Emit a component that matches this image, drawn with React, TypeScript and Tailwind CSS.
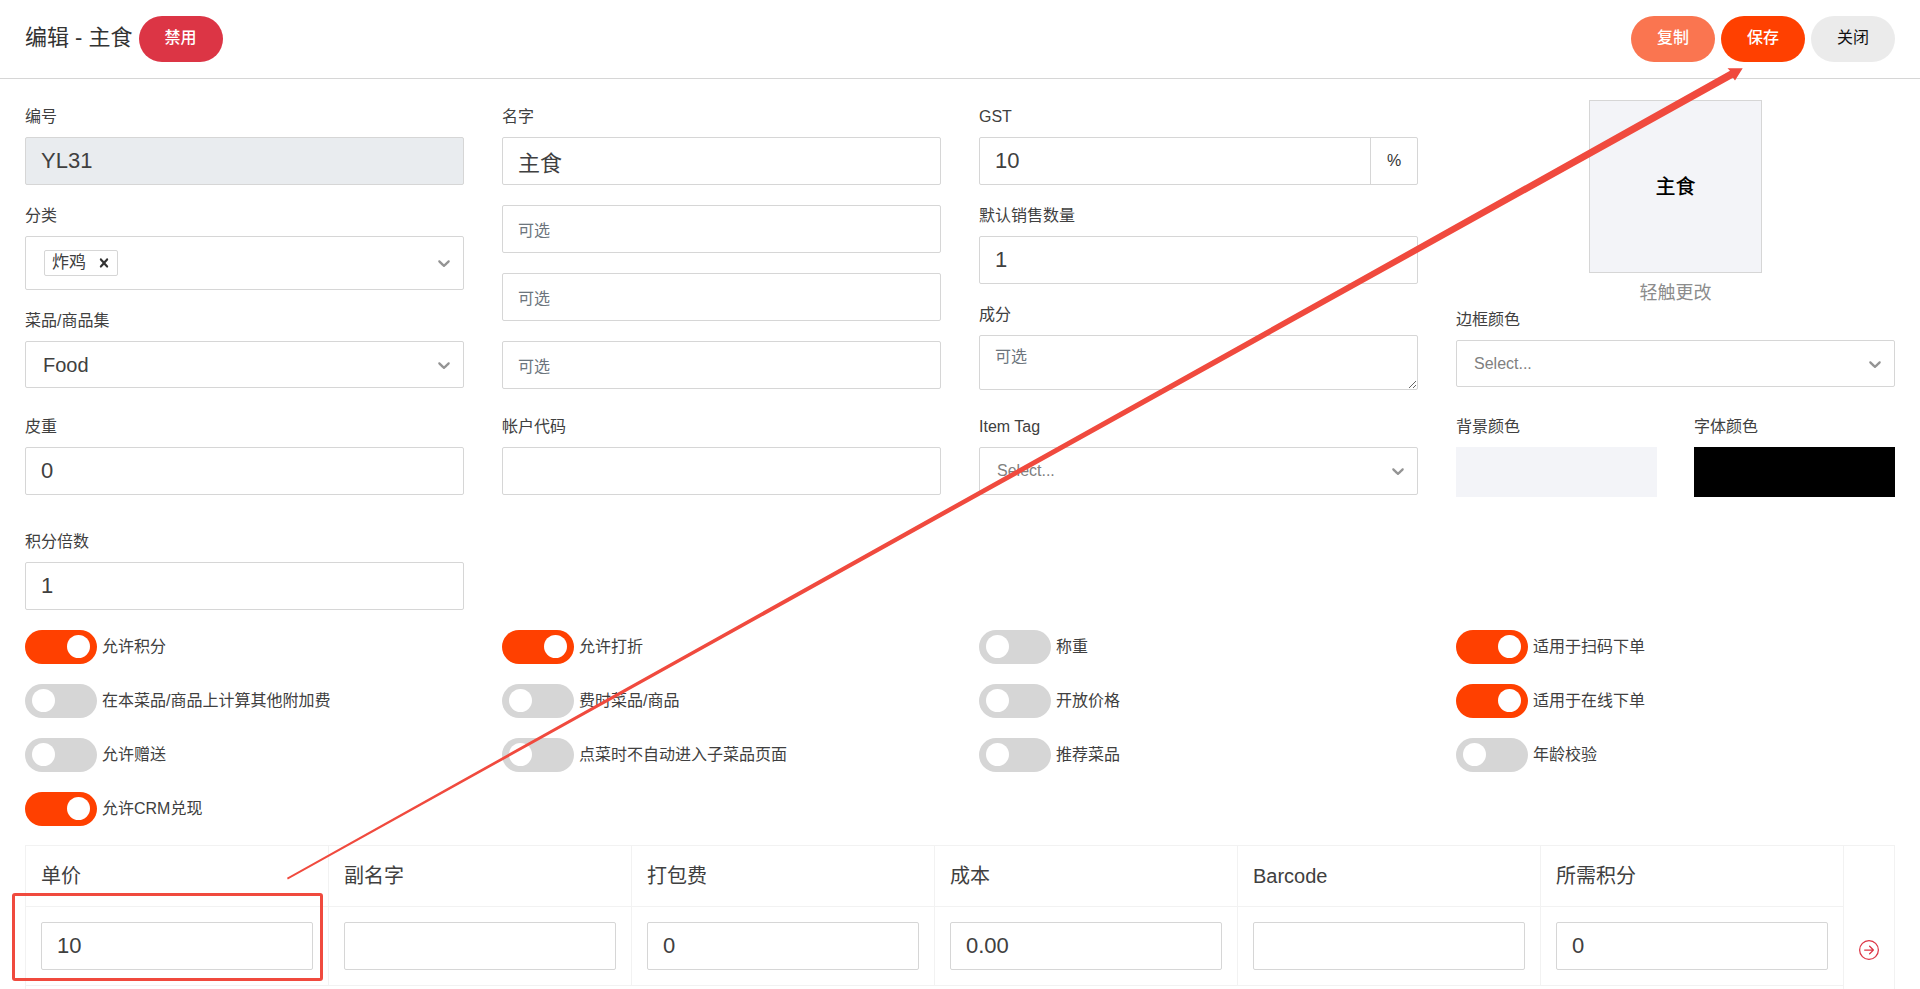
import { useId, type ReactNode } from "react";
import { BsArrowRightCircle } from "react-icons/bs";

const controlClass =
  "block w-full rounded-xs border border-[#d6d6d6] bg-white px-[15px] text-[22px] text-[#404040] outline-none placeholder:text-base placeholder:text-[#6c757d]";

function Field({ label, children }: { label: string; children: (id: string) => ReactNode }) {
  const id = useId();
  return (
    <div>
      <label htmlFor={id} className="mb-[7px] block leading-[26px]">
        {label}
      </label>
      {children(id)}
    </div>
  );
}

function TextField({ label, value = "", disabled = false }: { label: string; value?: string; disabled?: boolean }) {
  return (
    <Field label={label}>
      {(id) => (
        <input
          id={id}
          defaultValue={value}
          disabled={disabled}
          className={`${controlClass} h-12 disabled:bg-[#e9ecef]`}
        />
      )}
    </Field>
  );
}

function Chevron() {
  return (
    <svg
      viewBox="0 0 20 20"
      aria-hidden="true"
      className="pointer-events-none absolute top-1/2 right-[10px] size-5 -translate-y-1/2 fill-[#949494]"
    >
      <path d="M4.516 7.548c0.436-0.446 1.043-0.481 1.576 0l3.908 3.747 3.908-3.747c0.533-0.481 1.141-0.446 1.574 0 0.436 0.445 0.408 1.197 0 1.615-0.406 0.418-4.695 4.502-4.695 4.502-0.217 0.223-0.502 0.335-0.787 0.335s-0.57-0.112-0.789-0.335c0 0-4.287-4.084-4.695-4.502s-0.436-1.17 0-1.615z" />
    </svg>
  );
}

function SelectField({ label, value, height = "h-12" }: { label: string; value?: string; height?: string }) {
  return (
    <Field label={label}>
      {(id) => (
        <div className="relative">
          <select
            id={id}
            className={`block w-full appearance-none rounded-xs border border-[#d6d6d6] bg-white px-[17px] outline-none ${height} ${
              value ? "text-xl text-[#404040]" : "text-base text-[#808080]"
            }`}
          >
            <option>{value ?? "Select..."}</option>
          </select>
          <Chevron />
        </div>
      )}
    </Field>
  );
}

function CategoryField() {
  return (
    <Field label="分类">
      {(id) => (
        <div className="relative">
          <div className="flex h-[54px] items-center rounded-xs border border-[#d6d6d6] pr-10 pl-[18px]">
            <span className="flex h-[26px] shrink-0 items-center rounded-xs border border-[#d6d6d6] pr-[3px] pl-[7px] text-[17px] leading-6">
              炸鸡
              <button type="button" aria-label="移除炸鸡" className="ml-2 p-px">
                <svg viewBox="0 0 20 20" aria-hidden="true" className="size-[18px] fill-[#333333]">
                  <path d="M14.348 14.849c-0.469 0.469-1.229 0.469-1.697 0l-2.651-3.030-2.651 3.029c-0.469 0.469-1.229 0.469-1.697 0-0.469-0.469-0.469-1.229 0-1.697l2.758-3.15-2.759-3.152c-0.469-0.469-0.469-1.228 0-1.697s1.228-0.469 1.697 0l2.652 3.031 2.651-3.031c0.469-0.469 1.228-0.469 1.697 0s0.469 1.229 0 1.697l-2.758 3.152 2.758 3.15c0.469 0.469 0.469 1.229 0 1.698z" />
                </svg>
              </button>
            </span>
            <input id={id} className="min-w-0 flex-1 outline-none" />
          </div>
          <Chevron />
        </div>
      )}
    </Field>
  );
}

function NameFields() {
  return (
    <div className="flex flex-col gap-5">
      <TextField label="名字" value="主食" />
      {[1, 2, 3].map((n) => (
        <input key={n} aria-label={`名字 ${n + 1}`} placeholder="可选" className={`${controlClass} h-12`} />
      ))}
    </div>
  );
}

function GstField() {
  return (
    <Field label="GST">
      {(id) => (
        <div className="flex h-12 overflow-hidden rounded-xs border border-[#d6d6d6]">
          <input
            id={id}
            defaultValue="10"
            className="min-w-0 flex-1 px-[15px] pb-0.5 text-[22px] outline-none"
          />
          <span className="flex w-[47px] items-center justify-center border-l border-[#d6d6d6] text-[#333333]">%</span>
        </div>
      )}
    </Field>
  );
}

function Swatch({ label, color }: { label: string; color: string }) {
  return (
    <Field label={label}>
      {(id) => <button id={id} type="button" className={`block h-[50px] w-full ${color}`} />}
    </Field>
  );
}

function Toggle({ label, on = false }: { label: string; on?: boolean }) {
  return (
    <label className="flex h-[34px] items-center gap-[5px] leading-6">
      <input
        type="checkbox"
        defaultChecked={on}
        className="h-[34px] w-[72px] shrink-0 appearance-none rounded-full bg-[#d6d6d6] px-[7px] py-[5px] before:block before:size-[23px] before:rounded-full before:bg-white checked:bg-[#ff4000] checked:before:translate-x-[35px]"
      />
      <span>{label}</span>
    </label>
  );
}

function PillButton({ children, className }: { children: ReactNode; className: string }) {
  return (
    <button type="button" className={`h-[46px] w-[84px] rounded-full pb-0.5 ${className}`}>
      {children}
    </button>
  );
}

const toggles: { label: string; on?: boolean }[] = [
  { label: "允许积分", on: true },
  { label: "允许打折", on: true },
  { label: "称重" },
  { label: "适用于扫码下单", on: true },
  { label: "在本菜品/商品上计算其他附加费" },
  { label: "费时菜品/商品" },
  { label: "开放价格" },
  { label: "适用于在线下单", on: true },
  { label: "允许赠送" },
  { label: "点菜时不自动进入子菜品页面" },
  { label: "推荐菜品" },
  { label: "年龄校验" },
  { label: "允许CRM兑现", on: true },
];

const priceColumns = [
  { name: "单价", value: "10", marked: true },
  { name: "副名字", value: "" },
  { name: "打包费", value: "0" },
  { name: "成本", value: "0.00" },
  { name: "Barcode", value: "" },
  { name: "所需积分", value: "0" },
];

function PriceTable() {
  const cell = "border border-[#f2f2f2]";
  return (
    <table className="mt-[19px] w-full table-fixed border-collapse">
      <colgroup>
        {priceColumns.map((c) => (
          <col key={c.name} />
        ))}
        <col className="w-[51px]" />
      </colgroup>
      <tbody>
        <tr>
          {priceColumns.map((c) => (
            <th key={c.name} scope="col" className={`${cell} h-[61px] px-[15px] text-left text-xl font-normal`}>
              {c.name}
            </th>
          ))}
          <td rowSpan={3} className={cell}>
            <button type="button" aria-label="展开" className="mx-auto block text-[#dc3545]">
              <BsArrowRightCircle size={20} />
            </button>
          </td>
        </tr>
        <tr>
          {priceColumns.map((c) => (
            <td key={c.name} className={`${cell} h-[79px] px-[15px]`}>
              <div className="relative">
                <input aria-label={c.name} defaultValue={c.value} className={`${controlClass} h-12`} />
                {c.marked && (
                  <div className="pointer-events-none absolute -top-[29px] -right-[10px] -bottom-[11px] -left-[29px] rounded-[3px] border-3 border-[#f04a3e]" />
                )}
              </div>
            </td>
          ))}
        </tr>
        <tr>
          <td colSpan={6} className={`${cell} h-[69px]`} />
        </tr>
      </tbody>
    </table>
  );
}

export default function App() {
  return (
    <div className="relative h-screen overflow-hidden bg-white font-['Liberation_Sans','Noto_Sans_CJK_SC',sans-serif] text-base text-[#404040]">
      <header className="flex items-center gap-[6px] border-b border-[#d6d6d6] px-[25px] py-4">
        <h1 className="pb-0.5 text-[22px] leading-[44px] text-[#333333]">编辑 - 主食</h1>
        <PillButton className="bg-[#dc3545] font-medium text-white">禁用</PillButton>
        <div className="ml-auto flex gap-[6px]">
          <PillButton className="bg-[#fa7550] font-medium text-white">复制</PillButton>
          <PillButton className="bg-[#ff4000] font-medium text-white">保存</PillButton>
          <PillButton className="bg-[#ebebeb] text-[#111111]">关闭</PillButton>
        </div>
      </header>

      <main className="px-[25px] pt-[21px]">
        <div className="grid grid-cols-4 gap-x-[38px]">
          <div className="mt-1 flex flex-col gap-[18px]">
            <TextField label="编号" value="YL31" disabled />
            <CategoryField />
            <SelectField label="菜品/商品集" value="Food" height="h-[47px]" />
          </div>
          <div className="mt-1">
            <NameFields />
          </div>
          <div className="mt-1 flex flex-col gap-[18px]">
            <GstField />
            <TextField label="默认销售数量" value="1" />
            <Field label="成分">
              {(id) => (
                <textarea
                  id={id}
                  placeholder="可选"
                  className={`${controlClass} h-[55px] resize-y py-[9px] leading-[30px]`}
                />
              )}
            </Field>
          </div>
          <div>
            <div className="flex flex-col items-center">
              <button
                type="button"
                className="size-[173px] border border-[#d6d6d6] bg-[#f3f4f8] text-xl font-medium text-black"
              >
                主食
              </button>
              <span className="mt-[7px] text-lg leading-[27px] text-[#8c8c8c]">轻触更改</span>
            </div>
            <SelectField label="边框颜色" height="h-[47px]" />
          </div>
        </div>

        <div className="mt-6 grid grid-cols-4 gap-x-[38px] gap-y-8">
          <TextField label="皮重" value="0" />
          <TextField label="帐户代码" />
          <SelectField label="Item Tag" />
          <div className="grid grid-cols-2 gap-[37px]">
            <Swatch label="背景颜色" color="bg-[#f3f4f8]" />
            <Swatch label="字体颜色" color="bg-black" />
          </div>
          <TextField label="积分倍数" value="1" />
        </div>

        <div className="mt-5 grid grid-cols-4 gap-x-[38px] gap-y-5">
          {toggles.map((t) => (
            <Toggle key={t.label} {...t} />
          ))}
        </div>

        <PriceTable />
      </main>

      <svg
        viewBox="0 0 1920 989"
        aria-hidden="true"
        className="pointer-events-none absolute top-0 left-0 w-full fill-[#f04a3e]"
      >
        <path d="M287 877.7 L1730 70.8 L1727.5 68.3 L1742.7 68.3 L1735 80.5 L1733 77.8 L287.8 879.4 Z" />
      </svg>
    </div>
  );
}
